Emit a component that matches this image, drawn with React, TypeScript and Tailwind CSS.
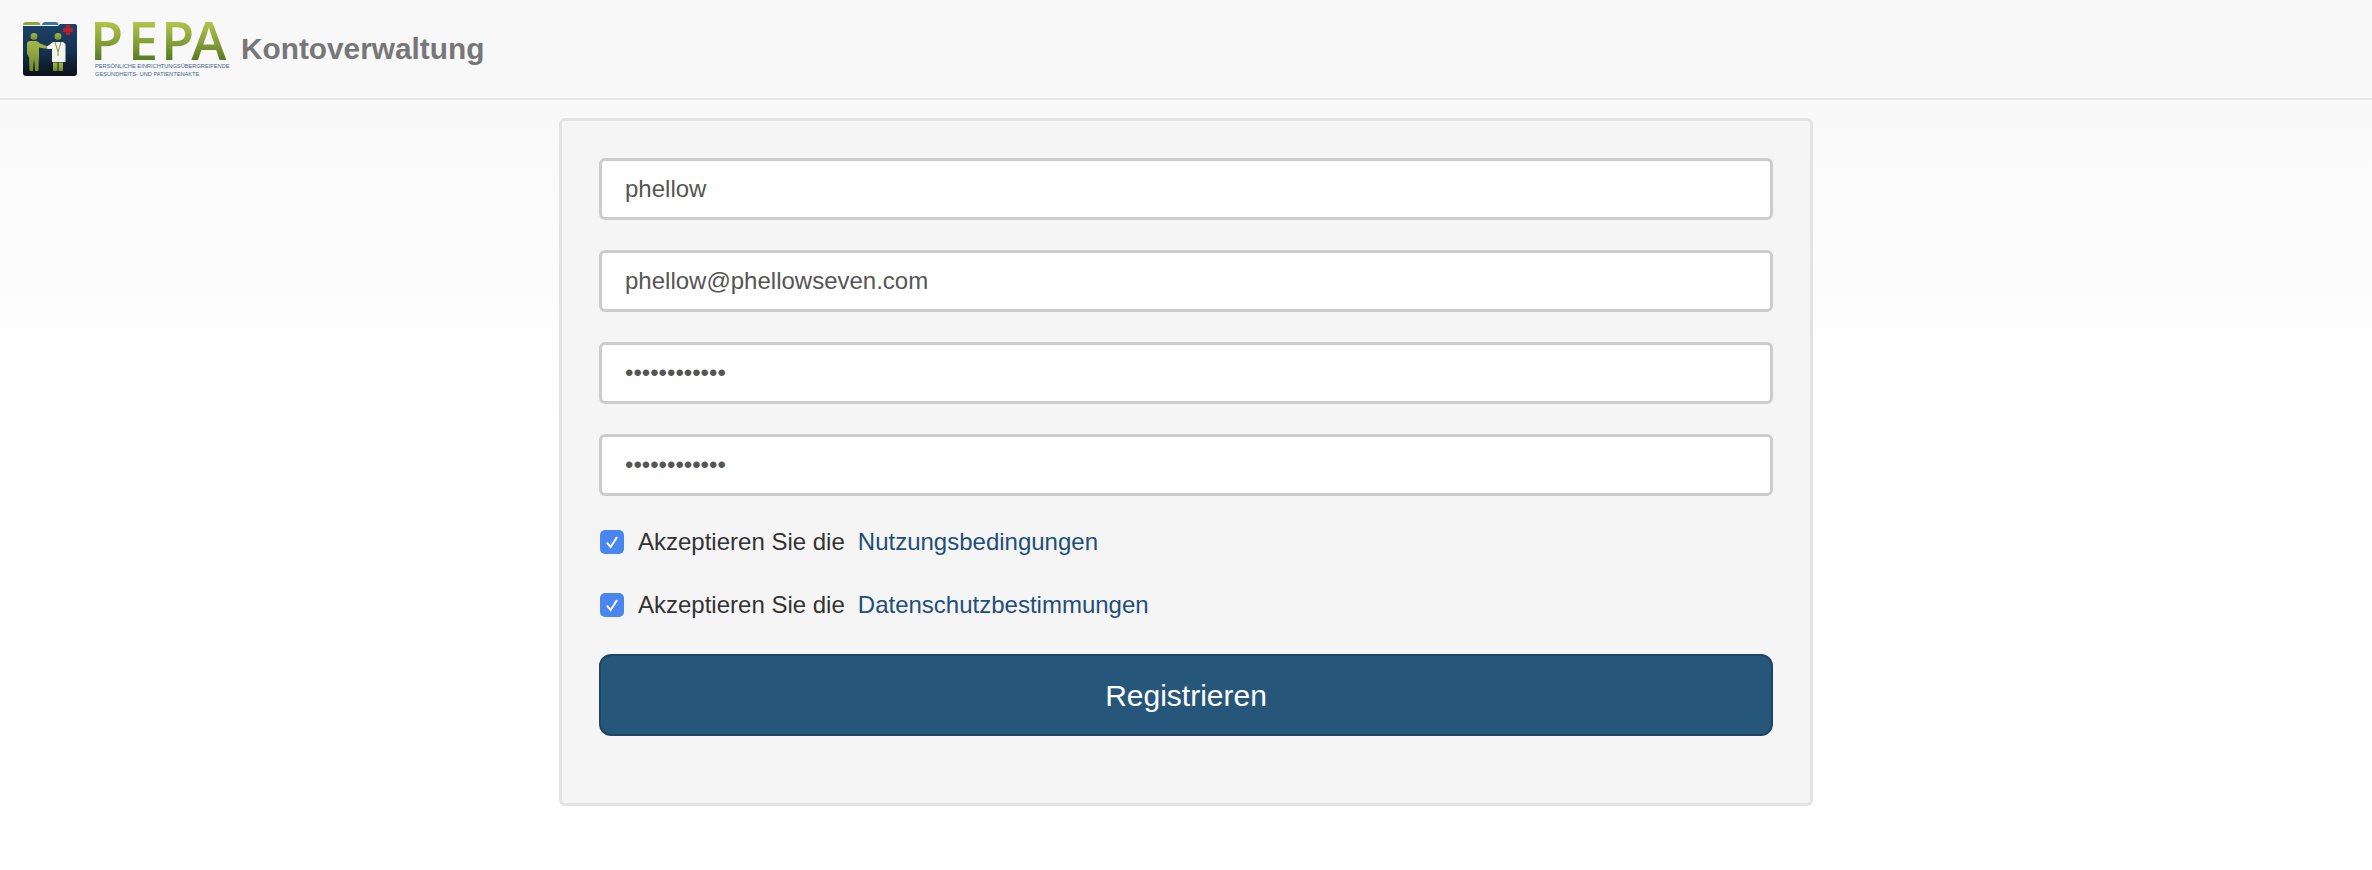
const fields = [
  { type: "text", value: "phellow" },
  { type: "email", value: "phellow@phellowseven.com" },
  { type: "password", value: "phellowseven" },
  { type: "password", value: "phellowseven" },
];

const consents = [
  { id: "terms", link: "Nutzungsbedingungen" },
  { id: "privacy", link: "Datenschutzbestimmungen" },
];

function FolderIcon() {
  return (
    <svg width="56" height="56" viewBox="0 0 56 56" className="shrink-0">
      <defs>
        <linearGradient id="folder" x1="0" y1="0" x2="0" y2="1">
          <stop offset="0" stopColor="#1d4268" />
          <stop offset="0.55" stopColor="#15304f" />
          <stop offset="1" stopColor="#0a1018" />
        </linearGradient>
        <linearGradient id="person" x1="0" y1="0" x2="0" y2="1">
          <stop offset="0" stopColor="#a3b94a" />
          <stop offset="1" stopColor="#6f8a2c" />
        </linearGradient>
      </defs>
      <path d="M1 5H36L38 3H53Q55 3 55 5V52Q55 55 52 55H4Q1 55 1 52Z" fill="url(#folder)" />
      <path d="M1 4Q1 1 4 1H16Q18 1 18.500 4H1Z" fill="#8ea63c" />
      <path d="M20 4Q20.500 1 23 1H34Q36 1 36.500 4Z" fill="#3a73a8" />
      <path d="M44 4h4v3h3v4h-3v3h-4v-3h-3v-4h3z" fill="#b5202c" />
      <circle cx="12" cy="15.500" r="3.400" fill="url(#person)" />
      <path d="M5 23Q5 20 8 20H14Q16 20 18 22.500L26 25.500L25.500 28L17 26.500V34L16.500 50H13L12 37L11 50H7.500L7 36Q5 34 5 32Z" fill="url(#person)" />
      <circle cx="36" cy="15.500" r="3.400" fill="url(#person)" />
      <path d="M25 25.500L31 21H41L43.500 23V41H30V28L25.500 28Z" fill="#f2f4ef" />
      <path d="M31 41.500H35.500V50H31ZM36.500 41.500H41V50H36.500Z" fill="url(#person)" />
      <path d="M33 21L36 31L39 21M36 31V35" stroke="#7f9833" strokeWidth="1" fill="none" />
    </svg>
  );
}

function PepaLogo() {
  return (
    <div className="ml-[17px] w-[136px] shrink-0">
      <div className="flex h-[40px] bg-[linear-gradient(180deg,#b6c94c_0%,#8ba33a_50%,#587a24_100%)] bg-clip-text font-['Open_Sans',sans-serif] text-[54px] font-semibold leading-[40px] text-transparent">
        <span className="ml-[-5px] w-[38px]">P</span>
        <span className="w-[33px]">E</span>
        <span className="w-[30px]">P</span>
        <span>A</span>
      </div>
      <div className="mt-[2px] whitespace-nowrap text-[5.700px] leading-[8px] text-[#41658f]">
        <p>PERSÖNLICHE EINRICHTUNGSÜBERGREIFENDE</p>
        <p>GESUNDHEITS- UND PATIENTENAKTE</p>
      </div>
    </div>
  );
}

export default function App() {
  return (
    <div className="min-h-screen bg-[linear-gradient(180deg,#f9f9f9_100px,#ffffff_420px)] font-['Liberation_Sans',Arial,sans-serif]">
      <header className="flex h-[100px] items-center border-b-2 border-[#e7e7e7] bg-[#f8f8f8] pl-[22px]">
        <FolderIcon />
        <PepaLogo />
        <span className="ml-[10px] text-[29.800px] font-bold text-[#777777]">Kontoverwaltung</span>
      </header>

      <main className="mx-auto mt-[18px] h-[688px] w-[1254px] rounded-[6px] border-[3px] border-[#e3e3e3] bg-[#f5f5f5] px-[37px] pt-[37px]">
        <div className="flex flex-col gap-[30px]">
          {fields.map((field, i) => (
            <input
              key={i}
              readOnly
              type={field.type}
              value={field.value}
              className="h-[62px] w-full rounded-[6px] border-[3px] border-[#cccccc] bg-white px-[23px] text-[24px] text-[#555555] outline-none"
            />
          ))}
        </div>

        <div className="mt-[14px] flex flex-col">
          {consents.map((item) => (
            <label key={item.id} className="flex h-[63.500px] items-center text-[24px] text-[#333333]">
              <span className="ml-[1px] mr-[14px] flex h-[24px] w-[24px] items-center justify-center rounded-[5px] bg-[#4a86f0]">
                <svg width="18" height="18" viewBox="0 0 16 16" fill="none" stroke="#ffffff" strokeWidth="1.800">
                  <path d="M3.500 8.500L6.800 12.500L12.500 3.500" />
                </svg>
              </span>
              <span>Akzeptieren Sie die</span>
              <a href="#" className="ml-[13px] text-[#1f4e79]">{item.link}</a>
            </label>
          ))}
        </div>

        <button className="mt-[17px] h-[82px] w-full rounded-[12px] border-2 border-[#1f4562] bg-[#27567b] text-[30px] text-white">
          Registrieren
        </button>
      </main>
    </div>
  );
}
